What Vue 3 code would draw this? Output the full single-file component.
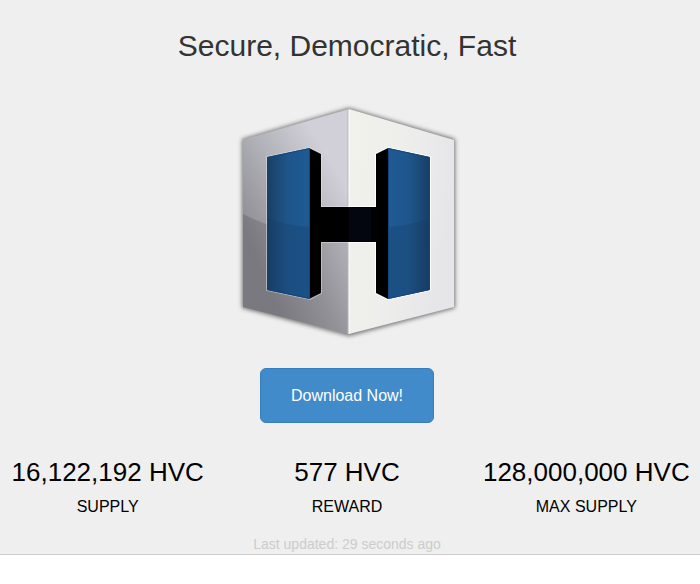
<template>
  <section class="hero">
    <h1>Secure, Democratic, Fast</h1>

    <svg class="logo" viewBox="232 98 230 250" role="img" aria-label="HVC logo">
      <defs>
        <linearGradient id="faceLeft" gradientUnits="userSpaceOnUse" x1="238" y1="216" x2="330" y2="160">
          <stop offset="0" stop-color="#8e8e94" />
          <stop offset="0.5" stop-color="#b0b0b7" />
          <stop offset="1" stop-color="#d1d0d8" />
        </linearGradient>
        <linearGradient id="faceLeftLow" gradientUnits="userSpaceOnUse" x1="258" y1="262" x2="352" y2="222">
          <stop offset="0" stop-color="#79797f" />
          <stop offset="0.45" stop-color="#919197" />
          <stop offset="1" stop-color="#bab9c1" />
        </linearGradient>
        <linearGradient id="faceRight" x1="0" y1="0" x2="1" y2="0.3">
          <stop offset="0" stop-color="#f1f2ea" />
          <stop offset="0.5" stop-color="#eeeeec" />
          <stop offset="1" stop-color="#e6e6e9" />
        </linearGradient>
        <linearGradient id="barLeft">
          <stop offset="0" stop-color="#193f65" />
          <stop offset="0.5" stop-color="#1e568c" />
          <stop offset="1" stop-color="#1f5a93" />
        </linearGradient>
        <linearGradient id="barRight">
          <stop offset="0" stop-color="#1f5a93" />
          <stop offset="0.5" stop-color="#1e568c" />
          <stop offset="1" stop-color="#183e64" />
        </linearGradient>
        <filter id="shadow" x="-10%" y="-10%" width="120%" height="120%">
          <feGaussianBlur stdDeviation="2" />
        </filter>
      </defs>

      <path d="M242 139 349 108 455 139V308L349 336 242 308Z" fill="#555" opacity="0.8" filter="url(#shadow)" />
      <path d="M243 141Q243 139 245 139L349 109V334L243 307Z" fill="url(#faceLeft)" />
      <path d="M243 214Q285 236 349 238V334L243 307Z" fill="url(#faceLeftLow)" />
      <path d="M349 109 454 140V307L349 334Z" fill="url(#faceRight)" />
      <path d="M348 110V334" stroke="#b4b4bc" />
      <path d="M349 110V334" stroke="#fff" />

      <path
        d="M267 157 310 148 321 154V207H349V242H321V293L310 299 267 290Z"
        fill="none"
        stroke="#e4e4ea"
        stroke-width="2"
        opacity="0.5"
      />
      <path
        d="M349 207H376V154L388 148 430 157V290L388 299 376 293V242H349Z"
        fill="none"
        stroke="#fff"
        stroke-width="2"
      />
      <path d="M309 148 321 154V207H376V154L388 148V299L376 293V242H321V293L309 299Z" fill="#000" />
      <path d="M349 208H371V241H349Z" fill="#03060e" />

      <path d="M267 157 310 148V299L267 290Z" fill="url(#barLeft)" />
      <path d="M267 218Q288 226 310 227V299L267 290Z" fill="#15385f" opacity="0.25" />
      <path d="M267.5 157.5 309.5 148.5V298.5L267.5 289.5Z" fill="none" stroke="#12457d" />
      <path d="M388 148 430 157V290L388 299Z" fill="url(#barRight)" />
      <path d="M388 227Q409 226 430 218V290L388 299Z" fill="#15385f" opacity="0.25" />
      <path d="M388.5 148.5 429.5 157.5V289.5L388.5 298.5Z" fill="none" stroke="#12457d" />
    </svg>

    <button type="button" class="btn-download">Download Now!</button>

    <div class="stats">
      <div v-for="stat in stats" :key="stat.label" class="stat">
        <div class="value">{{ stat.value }}</div>
        <div class="label">{{ stat.label }}</div>
      </div>
    </div>

    <p class="updated">Last updated: {{ secondsAgo }} seconds ago</p>
  </section>
</template>

<script setup>
import { ref } from 'vue'

const secondsAgo = ref(29)

const stats = ref([
  { label: 'SUPPLY', value: '16,122,192 HVC' },
  { label: 'REWARD', value: '577 HVC' },
  { label: 'MAX SUPPLY', value: '128,000,000 HVC' },
])
</script>

<style>
body {
  background-color: #fff;
}
</style>

<style scoped>
.hero {
  display: flex;
  flex-direction: column;
  align-items: center;
  padding: 28px 6px 0 0;
  overflow: hidden;
  background-color: #efefef;
  border-bottom: 1px solid #ccc;
  color: #000;
  font-family: 'Liberation Sans', Arial, sans-serif;
}

h1 {
  margin: 0;
  color: #333;
  font-size: 30px;
  font-weight: normal;
  line-height: 36px;
}

.logo {
  width: 230px;
  height: 250px;
  margin-top: 34px;
}

.btn-download {
  margin-top: 20px;
  padding: 16px 30px;
  border: 1px solid #357ebd;
  border-radius: 6px;
  background-color: #428bca;
  color: #fff;
  font-family: inherit;
  font-size: 16px;
  line-height: 21px;
  cursor: pointer;
}

.stats {
  display: grid;
  grid-template-columns: repeat(3, 1fr);
  align-self: stretch;
  margin: 32px -12px 0;
  text-align: center;
}

.value {
  font-size: 26px;
  line-height: 34px;
}

.label {
  margin-top: 6px;
  font-size: 16px;
  line-height: 24px;
}

.updated {
  margin: 15px 0 0;
  color: #ccc;
  font-size: 14px;
  line-height: 20px;
}
</style>
